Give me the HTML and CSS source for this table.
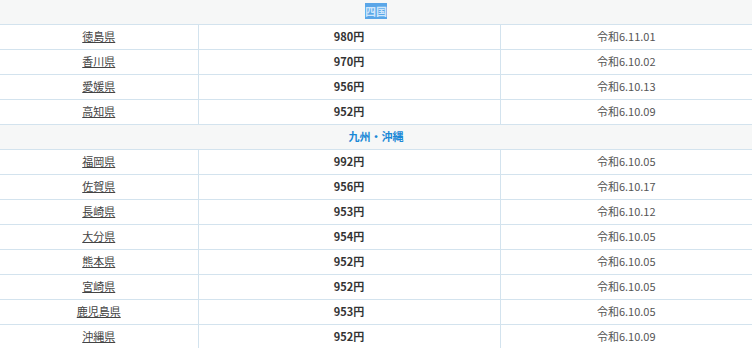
FILE: index.html
```html
<!DOCTYPE html>
<html lang="ja">
<head>
<meta charset="utf-8">
<link rel="stylesheet" href="styles.css">
</head>
<body>
<table class="wage">
  <colgroup><col class="c1"><col class="c2"><col class="c3"></colgroup>
  <tbody>
    <tr class="region first"><th colspan="3"><span class="sel">四国</span></th></tr>
    <tr><td><a href="#">徳島県</a></td><td class="price">980円</td><td class="date">令和6.11.01</td></tr>
    <tr><td><a href="#">香川県</a></td><td class="price">970円</td><td class="date">令和6.10.02</td></tr>
    <tr><td><a href="#">愛媛県</a></td><td class="price">956円</td><td class="date">令和6.10.13</td></tr>
    <tr><td><a href="#">高知県</a></td><td class="price">952円</td><td class="date">令和6.10.09</td></tr>
    <tr class="region"><th colspan="3">九州・沖縄</th></tr>
    <tr><td><a href="#">福岡県</a></td><td class="price">992円</td><td class="date">令和6.10.05</td></tr>
    <tr><td><a href="#">佐賀県</a></td><td class="price">956円</td><td class="date">令和6.10.17</td></tr>
    <tr><td><a href="#">長崎県</a></td><td class="price">953円</td><td class="date">令和6.10.12</td></tr>
    <tr><td><a href="#">大分県</a></td><td class="price">954円</td><td class="date">令和6.10.05</td></tr>
    <tr><td><a href="#">熊本県</a></td><td class="price">952円</td><td class="date">令和6.10.05</td></tr>
    <tr><td><a href="#">宮崎県</a></td><td class="price">952円</td><td class="date">令和6.10.05</td></tr>
    <tr><td><a href="#">鹿児島県</a></td><td class="price">953円</td><td class="date">令和6.10.05</td></tr>
    <tr><td><a href="#">沖縄県</a></td><td class="price">952円</td><td class="date">令和6.10.09</td></tr>
  </tbody>
</table>
</body>
</html>
```

FILE: styles.css
```css
html, body {
  margin: 0;
  padding: 0;
  background: #ffffff;
}
body {
  font-family: "Noto Sans CJK JP", "Noto Sans", sans-serif;
  font-size: 11px;
  color: #444;
  overflow: hidden;
}
.wage {
  width: 752px;
  border-collapse: collapse;
  table-layout: fixed;
}
.c1 { width: 198px; }
.c2 { width: 302px; }
.c3 { width: 252px; }
.wage td, .wage th {
  height: 25px;
  padding: 0 0 2px;
  box-sizing: border-box;
  text-align: center;
  vertical-align: middle;
  border: 1px solid #d3e3ee;
  line-height: 14px;
}
.wage tr.first th {
  border-top: none;
  height: 24px;
}
.region th {
  background: #f6f7f7;
  color: #1a88d6;
  font-weight: bold;
  border-left: none;
  border-right: none;
}
.wage td:first-child { border-left: none; }
.wage td:last-child { border-right: none; }
.sel {
  background: #5aa6e8;
  color: #cfe6fb;
}
.wage a {
  color: #444;
  text-decoration: underline;
}
.price {
  font-weight: bold;
  color: #333;
}
.date {
  color: #555;
}
```
